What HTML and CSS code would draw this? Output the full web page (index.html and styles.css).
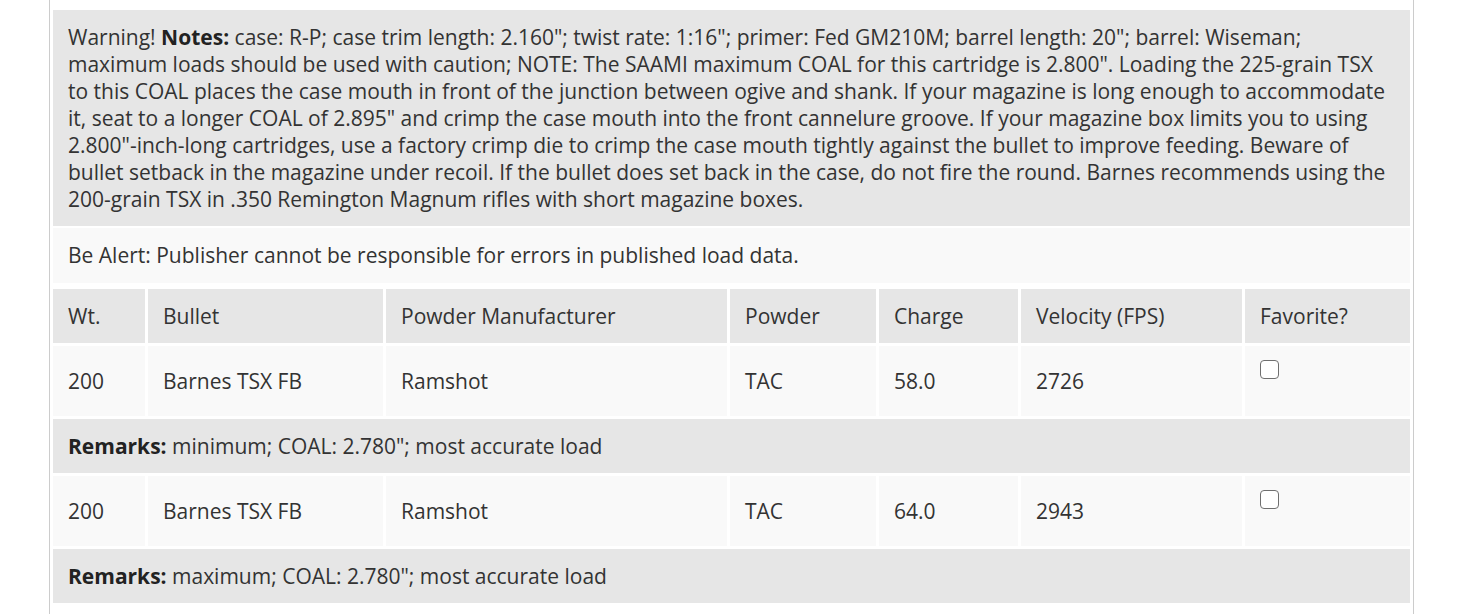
FILE: index.html
```html
<!DOCTYPE html>
<html lang="en">
<head>
<meta charset="utf-8">
<title>Load Data</title>
<link rel="stylesheet" href="styles.css">
</head>
<body>
<div class="panel">
  <div class="notes">Warning! <strong>Notes:</strong> case: R-P; case trim length: 2.160"; twist rate: 1:16"; primer: Fed GM210M; barrel length: 20"; barrel: Wiseman; maximum loads should be used with caution; NOTE: The SAAMI maximum COAL for this cartridge is 2.800". Loading the 225-grain TSX to this COAL places the case mouth in front of the junction between ogive and shank. If your magazine is long enough to accommodate it, seat to a longer COAL of 2.895" and crimp the case mouth into the front cannelure groove. If your magazine box limits you to using 2.800"-inch-long cartridges, use a factory crimp die to crimp the case mouth tightly against the bullet to improve feeding. Beware of bullet setback in the magazine under recoil. If the bullet does set back in the case, do not fire the round. Barnes recommends using the 200-grain TSX in .350 Remington Magnum rifles with short magazine boxes.</div>
  <div class="alert">Be Alert: Publisher cannot be responsible for errors in published load data.</div>
  <table class="loads">
    <thead>
      <tr>
        <th class="c-wt">Wt.</th>
        <th class="c-bullet">Bullet</th>
        <th class="c-mfr">Powder Manufacturer</th>
        <th class="c-powder">Powder</th>
        <th class="c-charge">Charge</th>
        <th class="c-vel">Velocity (FPS)</th>
        <th class="c-fav">Favorite?</th>
      </tr>
    </thead>
    <tbody>
      <tr class="data">
        <td>200</td>
        <td>Barnes TSX FB</td>
        <td>Ramshot</td>
        <td>TAC</td>
        <td>58.0</td>
        <td>2726</td>
        <td class="fav"><input type="checkbox" class="check" aria-label="Favorite"></td>
      </tr>
      <tr class="remarks">
        <td colspan="7"><strong>Remarks:</strong> minimum; COAL: 2.780"; most accurate load</td>
      </tr>
      <tr class="data">
        <td>200</td>
        <td>Barnes TSX FB</td>
        <td>Ramshot</td>
        <td>TAC</td>
        <td>64.0</td>
        <td>2943</td>
        <td class="fav"><input type="checkbox" class="check" aria-label="Favorite"></td>
      </tr>
      <tr class="remarks">
        <td colspan="7"><strong>Remarks:</strong> maximum; COAL: 2.780"; most accurate load</td>
      </tr>
    </tbody>
  </table>
</div>
</body>
</html>
```
FILE: styles.css
```css
html, body {
  margin: 0;
  padding: 0;
  background: #ffffff;
}

body {
  font-family: "Open Sans", "Liberation Sans", sans-serif;
  font-size: 21px;
  line-height: 27px;
  color: #333333;
}

.panel {
  margin-left: 49px;
  width: 1365px;
  border-left: 1px solid #cccccc;
  border-right: 1px solid #cccccc;
  padding-top: 10px;
  min-height: 614px;
  box-sizing: border-box;
}

.notes {
  margin: 0 3px;
  background: #e6e6e6;
  padding: 13.5px 15px;
}

.notes strong,
.remarks strong {
  font-weight: 700;
  color: #222222;
}

.alert {
  margin: 2px 3px 0;
  background: #f9f9f9;
  padding: 14px 15px;
}

.loads {
  width: 100%;
  border-collapse: separate;
  border-spacing: 3px;
  table-layout: fixed;
  margin-top: 3px;
}

.loads th,
.loads td {
  box-sizing: border-box;
  padding: 13.5px 15px;
  text-align: left;
  font-weight: 400;
  vertical-align: middle;
}

.loads th {
  background: #e6e6e6;
  height: 54px;
}

.c-wt { width: 92px; }
.c-bullet { width: 235px; }
.c-mfr { width: 341px; }
.c-powder { width: 146px; }
.c-charge { width: 139px; }
.c-vel { width: 221px; }
.c-fav { width: 165px; }

.data td {
  background: #f9f9f9;
  height: 70px;
}

.data td.fav {
  vertical-align: top;
}

.remarks td {
  background: #e6e6e6;
  height: 54px;
}

.check {
  appearance: none;
  -webkit-appearance: none;
  display: block;
  width: 19px;
  height: 19px;
  margin: 0;
  border: 1.5px solid #6f6f6f;
  border-radius: 4px;
  background: #ffffff;
  box-sizing: border-box;
}
```
